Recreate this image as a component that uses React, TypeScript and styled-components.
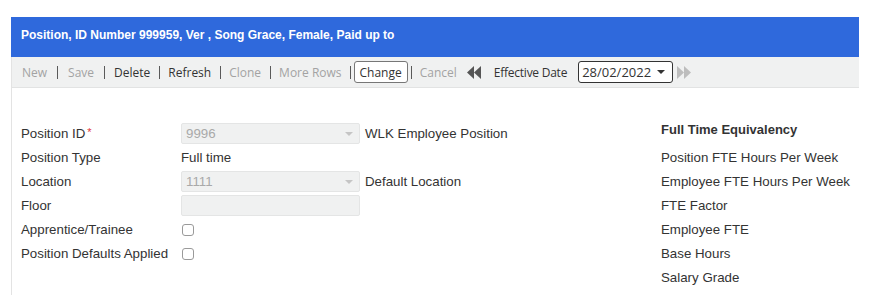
import React from "react";
import styled, { createGlobalStyle } from "styled-components";

const GlobalStyle = createGlobalStyle`
  html, body {
    margin: 0;
    padding: 0;
    background: #ffffff;
  }
`;

const Page = styled.div`
  padding: 17px 10px 0 11px;
  height: 306px;
  box-sizing: border-box;
  overflow: hidden;
`;

const Panel = styled.section`
  width: 848px;
  border-left: 1px solid #e3e3e3;
  height: 278px;
  box-sizing: border-box;
`;

const Header = styled.div`
  height: 40px;
  box-sizing: border-box;
  background: #2f69dc;
  margin-left: -1px;
  padding: 11px 0 0 10px;
  font-family: "Liberation Sans", Arial, sans-serif;
  font-weight: bold;
  font-size: 12px;
  line-height: 15px;
  color: #ffffff;
`;

const Toolbar = styled.div`
  height: 30px;
  background: #f0f1f1;
  border-bottom: 1px solid #e2e3e3;
  display: flex;
  align-items: center;
  padding-left: 10px;
  font-family: "Open Sans", sans-serif;
  font-size: 12px;
`;

const ToolItem = styled.span<{ $disabled?: boolean }>`
  color: ${(p) => (p.$disabled ? "#a3a3a3" : "#333333")};
  white-space: nowrap;
`;

const Sep = styled.span<{ $l?: number; $r?: number }>`
  display: inline-block;
  flex: none;
  width: 1px;
  height: 13px;
  background: #5a5a5a;
  margin: 0 ${(p) => p.$r ?? 9}px 0 ${(p) => p.$l ?? 9}px;
`;

const ChangeButton = styled.span`
  display: inline-flex;
  align-items: center;
  height: 22px;
  box-sizing: border-box;
  padding: 0 5px;
  border: 1px solid #777;
  border-radius: 3px;
  background: #ffffff;
  color: #333333;
`;

const NavIcon = styled.svg<{ $gap: number }>`
  display: block;
  flex: none;
  margin-left: ${(p) => p.$gap}px;
`;

const DateLabel = styled.span`
  color: #333333;
  letter-spacing: -0.25px;
  margin: 0 11px 0 12px;
`;

const DateSelect = styled.div`
  width: 95px;
  height: 22px;
  box-sizing: border-box;
  border: 1px solid #333;
  border-radius: 3px;
  background: #fff;
  display: flex;
  align-items: center;
  justify-content: space-between;
  padding: 0 7px 0 3px;
  font-size: 13px;
  color: #333;
`;

const Caret = styled.span<{ $light?: boolean }>`
  width: 0;
  height: 0;
  border-left: 4px solid transparent;
  border-right: 4px solid transparent;
  border-top: 4px solid ${(p) => (p.$light ? "#c5c5c5" : "#333")};
`;

const Body = styled.div`
  display: flex;
  padding: 35px 0 0 9px;
  font-family: "Liberation Sans", Arial, sans-serif;
  font-size: 13.3px;
  color: #333333;
`;

const FormGrid = styled.div`
  display: grid;
  grid-template-columns: 160px auto;
  grid-auto-rows: 24px;
  width: 640px;
`;

const Label = styled.div`
  display: flex;
  align-items: center;
  height: 21px;
`;

const Required = styled.span`
  color: #e2353c;
  font-size: 11px;
  margin-left: 2px;
  align-self: flex-start;
  margin-top: 3px;
`;

const Value = styled.div`
  display: flex;
  align-items: center;
  height: 21px;
`;

const Field = styled.div`
  width: 179px;
  height: 21px;
  box-sizing: border-box;
  background: #f0f1f1;
  border: 1px solid #e4e5e5;
  border-radius: 2px;
  display: flex;
  align-items: center;
  justify-content: space-between;
  padding: 0 6px 0 4px;
  color: #a9a9a9;
`;

const Aside = styled.span`
  margin-left: 5px;
  white-space: nowrap;
`;

const Check = styled.span`
  width: 12px;
  height: 12px;
  box-sizing: border-box;
  border: 1px solid #9a9a9a;
  border-radius: 3px;
  margin-left: 1px;
`;

const FteColumn = styled.div`
  display: grid;
  grid-auto-rows: 24px;
`;

const FteTitle = styled.div`
  font-weight: bold;
  font-size: 13px;
  height: 28px;
  margin-top: -8px;
  display: flex;
  align-items: center;
`;

const FteRow = styled.div`
  display: flex;
  align-items: center;
  height: 21px;
  white-space: nowrap;
`;

const DoubleArrow = ({
  dir,
  color,
  gap,
}: {
  dir: "left" | "right";
  color: string;
  gap: number;
}) => (
  <NavIcon $gap={gap} width="15" height="13" viewBox="0 0 15 13">
    {dir === "left" ? (
      <>
        <polygon points="7,0 7,13 0,6.5" fill={color} />
        <polygon points="14,0 14,13 7,6.5" fill={color} />
      </>
    ) : (
      <>
        <polygon points="0,0 0,13 7,6.5" fill={color} />
        <polygon points="7,0 7,13 14,6.5" fill={color} />
      </>
    )}
  </NavIcon>
);

// separator margins [left, right] after each tool
const tools: { label: string; disabled?: boolean; sep: [number, number] }[] = [
  { label: "New", disabled: true, sep: [10, 10] },
  { label: "Save", disabled: true, sep: [10, 9] },
  { label: "Delete", sep: [9, 8] },
  { label: "Refresh", sep: [9, 8] },
  { label: "Clone", disabled: true, sep: [9, 8] },
  { label: "More Rows", disabled: true, sep: [8, 3] },
];

const fte = [
  "Position FTE Hours Per Week",
  "Employee FTE Hours Per Week",
  "FTE Factor",
  "Employee FTE",
  "Base Hours",
  "Salary Grade",
];

export default function App() {
  return (
    <>
      <GlobalStyle />
      <Page>
        <Panel>
          <Header>Position, ID Number 999959, Ver , Song Grace, Female, Paid up to</Header>
          <Toolbar>
            {tools.map((t) => (
              <React.Fragment key={t.label}>
                <ToolItem $disabled={t.disabled}>{t.label}</ToolItem>
                <Sep $l={t.sep[0]} $r={t.sep[1]} />
              </React.Fragment>
            ))}
            <ChangeButton>Change</ChangeButton>
            <Sep $l={3} $r={8} />
            <ToolItem $disabled>Cancel</ToolItem>
            <DoubleArrow dir="left" color="#555" gap={10} />
            <DateLabel>Effective Date</DateLabel>
            <DateSelect>
              <span>28/02/2022</span>
              <Caret />
            </DateSelect>
            <DoubleArrow dir="right" color="#bdbdbd" gap={4} />
          </Toolbar>
          <Body>
            <FormGrid>
              <Label>
                Position ID<Required>*</Required>
              </Label>
              <Value>
                <Field>
                  <span>9996</span>
                  <Caret $light />
                </Field>
                <Aside>WLK Employee Position</Aside>
              </Value>
              <Label>Position Type</Label>
              <Value>Full time</Value>
              <Label>Location</Label>
              <Value>
                <Field>
                  <span>1111</span>
                  <Caret $light />
                </Field>
                <Aside>Default Location</Aside>
              </Value>
              <Label>Floor</Label>
              <Value>
                <Field />
              </Value>
              <Label>Apprentice/Trainee</Label>
              <Value>
                <Check />
              </Value>
              <Label>Position Defaults Applied</Label>
              <Value>
                <Check />
              </Value>
            </FormGrid>
            <FteColumn>
              <FteTitle>Full Time Equivalency</FteTitle>
              {fte.map((f) => (
                <FteRow key={f}>{f}</FteRow>
              ))}
            </FteColumn>
          </Body>
        </Panel>
      </Page>
    </>
  );
}
